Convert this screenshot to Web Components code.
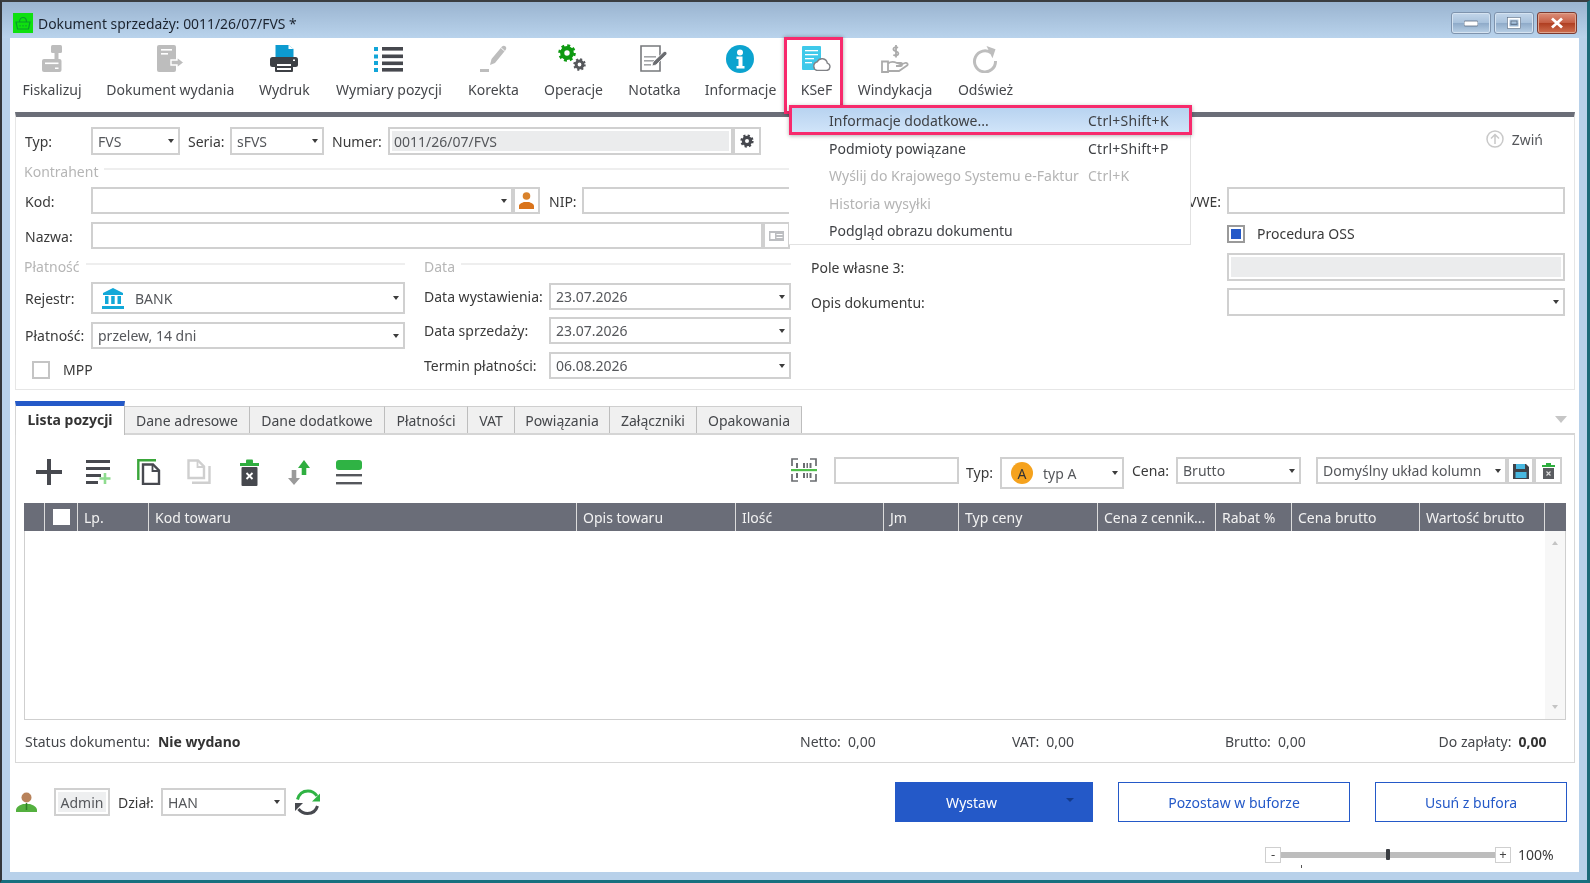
<!DOCTYPE html>
<html lang="pl">
<head>
<meta charset="utf-8">
<title>Dokument sprzedaży</title>
<style>
  html, body { margin: 0; height: 100%; overflow: hidden; background: #2c3136; }
  body { font: 14px "Noto Sans", "Open Sans", sans-serif; color: #3a3a3a; }
</style>
</head>
<body>
<app-window>
  <title-bar></title-bar>
  <tool-bar></tool-bar>
  <doc-form></doc-form>
  <tab-section></tab-section>
  <footer-bar></footer-bar>
  <ksef-menu></ksef-menu>
</app-window>

<script>
// ikony rysowane w pikselach ekranu
const svg = (w, h, body) => `<svg width="${w}" height="${h}" viewBox="0 0 ${w} ${h}" style="display:block;flex:none">${body}</svg>`;

const gear = (cx, cy, r, c, t) => `
  <circle cx="${cx}" cy="${cy}" r="${r}" fill="none" stroke="${c}" stroke-width="${t}"/>
  <circle cx="${cx}" cy="${cy}" r="${r + t / 2}" fill="none" stroke="${c}" stroke-width="${t * 0.9}" stroke-dasharray="${(r + t / 2) * 0.39} ${(r + t / 2) * 0.395}"/>`;

const G = "#bdbdbd";
const icons = {
  fisk: svg(20, 27, `<rect x="9" y="0" width="11" height="8" rx="1.5" fill="${G}"/><rect x="12.5" y="8" width="4" height="8" fill="${G}"/><rect x="0" y="14" width="19.5" height="13" rx="2" fill="${G}"/><rect x="3" y="17.5" width="13.5" height="1.6" fill="#fff"/><rect x="13" y="22.5" width="3.5" height="1.5" fill="#fff"/>`),
  wyd: svg(27, 27, `<rect x="0" y="0" width="19" height="27" rx="2" fill="${G}"/><rect x="4" y="4" width="11" height="1.6" fill="#fff"/><rect x="4" y="8" width="7" height="1.6" fill="#fff"/><path d="M14 15h6v-3l7 5.5-7 5.5v-3h-6z" fill="${G}" stroke="#fff" stroke-width="1.4"/>`),
  print: svg(28, 27, `<path d="M5.5 0h13l5 4v8h-18z" fill="#0d9bd0"/><path d="M18.5 0v4h5z" fill="#fff"/><rect x="0" y="12" width="28" height="10" rx="2.5" fill="#3d4045"/><rect x="5" y="17" width="18" height="10" rx="1" fill="#3d4045"/><rect x="7" y="19" width="14" height="2" fill="#fff"/><rect x="7" y="23" width="14" height="2" fill="#fff"/><rect x="23" y="14.5" width="2" height="1.5" fill="#fff"/>`),
  list: svg(29, 26, `<g fill="#12a5d8"><rect x="0" y="1" width="4" height="4"/><rect x="0" y="8.5" width="4" height="4"/><rect x="0" y="15" width="4" height="4"/><rect x="0" y="22" width="4" height="4"/></g><g fill="#46484e"><rect x="8" y="1" width="21" height="3.6"/><rect x="8" y="8.5" width="21" height="3.6"/><rect x="8" y="15.5" width="21" height="3.6"/><rect x="8" y="22" width="21" height="3.6"/></g>`),
  pen: svg(27, 27, `<path d="M10 20l1.5-6L22 1.5c1-1 2.6-1 3.6 0 .9 1 .9 2.4 0 3.4L15 18z" fill="${G}"/><path d="M21.2 3l3.6 3.2" stroke="#fff" stroke-width="1"/><rect x="0" y="24" width="9" height="3" fill="${G}"/>`),
  ops: svg(30, 29, `${gear(9, 9, 4.8, "#0f9a12", 4.2)}${gear(21.5, 20.5, 3.4, "#55575b", 3)}`),
  note: svg(28, 27, `<path d="M1 1h19v25H1z" fill="#fff" stroke="#77797c" stroke-width="1.6"/><g fill="#a2a4a7"><rect x="4" y="11" width="12" height="1.6"/><rect x="4" y="15" width="10" height="1.6"/><rect x="4" y="19" width="7" height="1.6"/></g><path d="M12 21l1-4L23.5 7c.8-.8 1.9-.8 2.8 0s.8 2 0 2.800L16 20z" fill="#6a6c70" stroke="#fff" stroke-width=".8"/>`),
  info: svg(28, 28, `<circle cx="14" cy="14" r="14" fill="#0ca3cf"/><circle cx="14" cy="7.500" r="3" fill="#fff"/><path d="M10.500 11.500h6v9.500h2v2.500h-8v-2.500h2v-7h-2z" fill="#fff"/>`),
  ksef: svg(29, 25, `<rect x="0" y="0" width="19" height="24" rx="1" fill="#3fc9ea"/><g fill="#fff"><rect x="3" y="4" width="13" height="1.300"/><rect x="3" y="8" width="13" height="1.300"/><rect x="3" y="12" width="9" height="1.300"/><rect x="3" y="16" width="7" height="1.300"/></g><path d="M15 24.500h9.500a3.800 3.800 0 0 0 .8-7.400 5.300 5.300 0 0 0-10-1.300 4.500 4.500 0 0 0-.3 8.700z" fill="#fff" stroke="#808286" stroke-width="1.400"/>`),
  hand: svg(28, 28, `<path d="M17 2.800c-2-1.300-4.600-.6-4.600 1.300 0 3 5 1.700 5 4.500 0 2-2.900 2.600-5 1.200M15 0v12.500" fill="none" stroke="#ababab" stroke-width="1.800"/><path d="M1 16.500h6v10.500H1zM7 18.500c3-2.500 6-2 9-.5h4c1.500 0 1.500 3 0 3h-5M16 21l8-3c2-.6 3.500 1.200 2 2.500L18 26H7" fill="#fff" stroke="#ababab" stroke-width="1.800"/>`),
  redo: svg(26, 28, `<path d="M19.600 8.200A10.500 10.500 0 1 0 23.500 16" fill="none" stroke="${G}" stroke-width="3"/><path d="M14.500 1l9 3.200-3 9z" fill="${G}"/>`),
  plus: svg(26, 26, `<rect x="0" y="11" width="26" height="4" fill="#47494f"/><rect x="11" y="0" width="4" height="26" fill="#47494f"/>`),
  addlist: svg(26, 26, `<g fill="#47494f"><rect x="0" y="1" width="24" height="3"/><rect x="0" y="8" width="24" height="3"/><rect x="0" y="15" width="15" height="3"/><rect x="0" y="22" width="12" height="3"/></g><path d="M19 14v11M13.500 19.500h11" stroke="#8fdc8f" stroke-width="2.600"/>`),
  copy: svg(24, 26, `<path d="M1.300 21V1.300H19" fill="none" stroke="#3aa63a" stroke-width="2.400"/><path d="M6 5.500h10l6 6V25H6z" fill="#fff" stroke="#47494f" stroke-width="2.400"/><path d="M15.500 5.500v6.500H22" fill="none" stroke="#47494f" stroke-width="1.800"/>`),
  paste: svg(24, 26, `<path d="M1.500 1.500h9.500l6 6V19H1.500z" fill="#fff" stroke="#cfcfcf" stroke-width="2.400"/><path d="M10.500 1.500v6.500H17" fill="none" stroke="#cfcfcf" stroke-width="1.800"/><path d="M5 23.800h17.500V7" fill="none" stroke="#cfcfcf" stroke-width="2.400"/>`),
  trash: svg(19, 27, `<rect x="0" y="4" width="19" height="3" fill="#2fae3f"/><rect x="6" y="0.500" width="7" height="4" rx="1" fill="#2fae3f"/><rect x="1.500" y="8" width="16" height="19" rx="1" fill="#46484e"/><path d="M6.500 14l6 6M12.500 14l-6 6" stroke="#fff" stroke-width="1.800"/>`),
  arrows: svg(22, 25, `<path d="M6 25l-6-7h3.700V10h4.600v8H12z" fill="#9a9a9a"/><path d="M16 0l6 8h-3.700v7h-4.600V8H10z" fill="#2fae3f"/>`),
  bars: svg(26, 25, `<rect x="0" y="0" width="26" height="10" rx="3" fill="#2fb344"/><rect x="0" y="14" width="26" height="2.400" fill="#55575c"/><rect x="0" y="22" width="26" height="2.400" fill="#55575c"/>`),
  code: svg(26, 26, `<g fill="none" stroke="#6a6c70" stroke-width="1.700"><path d="M1 9V2h6M25 9V2h-6M1 17v7h6M25 17v7h-6"/></g><g fill="#6a6c70"><rect x="5" y="6" width="2" height="5"/><rect x="12" y="6" width="2" height="5"/><rect x="15.500" y="6" width="1.500" height="5"/><rect x="18.500" y="6" width="2" height="5"/><rect x="5" y="16" width="2" height="5"/><rect x="12" y="16" width="2" height="5"/><rect x="15.500" y="16" width="1.500" height="5"/><rect x="18.500" y="16" width="2" height="5"/></g><rect x="0" y="12" width="26" height="2.200" fill="#4fc04a"/>`),
  floppy: svg(16, 16, `<path d="M0 1h13l3 3v12H0z" fill="#3f4248"/><rect x="3" y="1" width="9" height="5" fill="#48b8e0"/><rect x="2.500" y="9" width="11" height="6" fill="#48b8e0"/>`),
  smalltrash: svg(13, 16, `<rect x="0" y="2" width="13" height="2" fill="#2fae3f"/><rect x="4" y="0" width="5" height="2.500" fill="#2fae3f"/><rect x="1" y="5" width="11" height="11" fill="#5a5c60"/><path d="M4.500 8.500l4 4M8.500 8.500l-4 4" stroke="#ddd" stroke-width="1.100"/>`),
  bank: svg(22, 21, `<g fill="#12a8d8"><path d="M11 0l10 5v2H1V5z"/><rect x="3" y="8" width="3.500" height="8"/><rect x="9.200" y="8" width="3.500" height="8"/><rect x="15.500" y="8" width="3.500" height="8"/><rect x="0" y="18" width="22" height="3"/></g>`),
  gearbtn: svg(16, 16, `${gear(8, 8, 3.600, "#46484e", 3.200)}`),
  orange: svg(15, 17, `<circle cx="7.500" cy="4" r="3.800" fill="#d9822b"/><path d="M0 17v-3c0-2.500 3-3 5-4h5c2 1 5 1.500 5 4v3z" fill="#d9741c"/>`),
  card: svg(15, 10, `<rect width="15" height="10" fill="#bcbec1"/><rect x="1.500" y="2" width="4.500" height="6" fill="#fff"/><g fill="#fff"><rect x="7.500" y="3" width="6" height="1"/><rect x="7.500" y="6" width="6" height="1"/></g>`),
  user: svg(21, 20, `<path d="M0 20v-2c0-3 4-5 7-6h7c3 1 7 3 7 6v2z" fill="#54b03f"/><path d="M10.500 11v7" stroke="#2f7f26" stroke-width="1.500"/><circle cx="10.500" cy="5.500" r="5" fill="#b8825a"/>`),
  sync: svg(25, 26, `<path d="M2.500 10.500C4 5 8 2 13 2c4 0 7 2 9 5" fill="none" stroke="#2fb344" stroke-width="3"/><path d="M25 4.500v8h-8z" fill="#2fb344"/><path d="M22.500 17c-1.500 5-5.500 7.500-10 7.500-4 0-7-2-9-4.500" fill="none" stroke="#47494f" stroke-width="3"/><path d="M0 22v-8h8z" fill="#47494f"/>`),
  zwin: svg(18, 18, `<circle cx="9" cy="9" r="8" fill="none" stroke="#c9c9c9" stroke-width="1.500"/><path d="M9 14V5M5 8.500L9 4.500l4 4" fill="none" stroke="#c9c9c9" stroke-width="1.500"/>`),
  basket: svg(20, 20, `<rect width="20" height="20" fill="#0fe00f"/><path d="M3 9h14l-1.500 7h-11zM6.500 9c0-6 7-6 7 0" fill="none" stroke="#0a9c2a" stroke-width="1.200"/><path d="M7 12v1.500M10 12v1.500M13 12v1.500" stroke="#0a9c2a"/>`)
};

class AppWindow extends HTMLElement {
  constructor() {
    super();
    this.attachShadow({ mode: "open" });
    this.shadowRoot.innerHTML = `
      <style>
        :host {
          display: flex;
          flex-direction: column;
          position: relative;
          box-sizing: border-box;
          width: 1590px;
          height: 883px;
          margin: 0;
          padding: 0 8px 8px;
          border-top: 2px solid #3a3d40;
          border-left: 2px solid #33363a;
          border-right: 3px solid #1c6a78;
          border-bottom: 3px solid #17707f;
          background: #b8d1ea;
          filter: blur(.35px);
        }
        .client { flex: 1; background: #fff; display: flex; flex-direction: column; margin-top: 0; }
      </style>
      <slot name="title"></slot>
      <div class="client"><slot></slot></div>
    `;
  }
  connectedCallback() {
    this.querySelector("title-bar").slot = "title";
  }
}

class TitleBar extends HTMLElement {
  constructor() {
    super();
    this.attachShadow({ mode: "open" });
    this.shadowRoot.innerHTML = `
      <style>
        :host {
          display: flex;
          align-items: center;
          box-sizing: border-box;
          height: 36px;
          margin: 0 -8px;
          padding: 6px 10px 0 11px;
          background: linear-gradient(#9ab4d0, #b9d3ec);
          color: #1c2430;
          font-size: 13.9px;
        }
        span { margin-left: 5px; margin-top: 1px; }
        .btns { margin-left: auto; display: flex; gap: 3px; }
        .b {
          box-sizing: border-box;
          width: 40px;
          height: 22px;
          border: 1px solid #7e93ad;
          border-radius: 3px;
          box-shadow: inset 0 0 0 1px #d5e3f1;
          background: linear-gradient(#c3d6ea 0, #a9c2dc 48%, #8fabc9 52%, #b9d0e6 100%);
          display: flex;
          align-items: center;
          justify-content: center;
        }
        .b.x { border-color: #7c3a30; box-shadow: inset 0 0 0 1px #dfa58f; background: linear-gradient(#dc8f7a 0, #c65f45 48%, #b03f22 52%, #cf6f50 100%); }
      </style>
      ${icons.basket}
      <span>Dokument sprzedaży: 0011/26/07/FVS *</span>
      <div class="btns">
        <div class="b">${svg(14, 8, `<rect x="0" y="2" width="14" height="5" rx="1" fill="#fff" stroke="#5a6b80" stroke-width=".8"/>`)}</div>
        <div class="b">${svg(14, 12, `<rect x="1.500" y="1.500" width="11" height="9" fill="none" stroke="#fff" stroke-width="2"/><rect x=".5" y=".5" width="13" height="11" fill="none" stroke="#5a6b80" stroke-width=".6"/><rect x="4" y="4" width="6" height="3.500" fill="none" stroke="#5a6b80" stroke-width=".8"/>`)}</div>
        <div class="b x">${svg(14, 12, `<path d="M2 1.500l10 9M12 1.500l-10 9" stroke="#fff" stroke-width="2.800"/>`)}</div>
      </div>
    `;
  }
}

class ToolItem extends HTMLElement {
  constructor() {
    super();
    this.attachShadow({ mode: "open" });
  }
  connectedCallback() {
    const ring = this.hasAttribute("ring");
    this.shadowRoot.innerHTML = `
      <style>
        :host {
          display: flex;
          flex-direction: column;
          align-items: center;
          position: relative;
          flex: none;
          white-space: nowrap;
          color: #45474b;
        }
        .ic { height: 27px; display: flex; align-items: center; justify-content: center; }
        .t { margin-top: 8px; line-height: 20px; }
        .ring {
          position: absolute;
          left: -17px;
          right: -11px;
          top: -8px;
          bottom: -2px;
          border: 3px solid #f72a6c;
          box-shadow: 0 0 4px rgba(0,0,0,.35);
        }
      </style>
      <div class="ic">${icons[this.getAttribute("icon")]}</div>
      <div class="t"><slot></slot></div>
      ${ring ? `<div class="ring"></div>` : ""}
    `;
  }
}

class ToolBar extends HTMLElement {
  constructor() {
    super();
    this.attachShadow({ mode: "open" });
    const items = [
      ["fisk", 58, "Fiskalizuj"], ["wyd", 126.6, "Dokument wydania"], ["print", 49.4, "Wydruk"],
      ["list", 108, "Wymiary pozycji"], ["pen", 49, "Korekta"], ["ops", 59, "Operacje"],
      ["note", 51, "Notatka"], ["info", 69, "Informacje"], ["ksef", 31, "KSeF"],
      ["hand", 74, "Windykacja"], ["redo", 55, "Odśwież"]
    ];
    this.shadowRoot.innerHTML = `
      <style>
        :host { display: flex; gap: 26px; height: 74px; box-sizing: border-box; padding: 7px 0 0 13px; }
      </style>
      ${items.map(([i, w, t]) => `<tool-item icon="${i}" style="width:${w}px" ${t === "KSeF" ? "ring" : ""}>${t}</tool-item>`).join("")}
    `;
  }
}

class UiBox extends HTMLElement {
  constructor() {
    super();
    this.attachShadow({ mode: "open" });
  }
  connectedCallback() {
    this.shadowRoot.innerHTML = `
      <style>
        :host {
          display: flex;
          align-items: center;
          flex: none;
          box-sizing: border-box;
          height: 27px;
          border: 2px solid #d0d0d0;
          background: #fff;
          color: #55575b;
          padding-left: 5px;
          white-space: nowrap;
          overflow: hidden;
        }
        :host([gray]) { padding: 2px; }
        .fill { flex: 1; align-self: stretch; background: #ebeced; color: #55575b; display: flex; align-items: center; padding-left: 2px; }
        .c { margin-left: auto; margin-right: 4px; width: 0; height: 0; flex: none; border: 3.5px solid transparent; border-top: 4px solid #3c3c3c; border-bottom: 0; }
        :host([center]) { justify-content: center; padding: 0; }
      </style>
      ${this.hasAttribute("gray") ? `<div class="fill"><slot></slot></div>` : `<slot></slot>`}
      ${this.hasAttribute("caret") ? `<div class="c"></div>` : ""}
    `;
  }
}

class SectionLabel extends HTMLElement {
  constructor() {
    super();
    this.attachShadow({ mode: "open" });
    this.shadowRoot.innerHTML = `
      <style>
        :host { display: flex; align-items: center; height: 18px; color: #b6b6b6; }
        i { flex: 1; height: 2px; background: #eeeeee; margin: -4px 0 0 6px; }
      </style>
      <slot></slot><i></i>
    `;
  }
}

class DocForm extends HTMLElement {
  constructor() {
    super();
    this.attachShadow({ mode: "open" });
    this.shadowRoot.innerHTML = `
      <style>
        :host {
          display: block;
          box-sizing: border-box;
          height: 278px;
          margin: 0 4px 0 5px;
          padding: 10px 9px 0 9px;
          border: 1px solid #e6e6e6;
          border-top: 5px solid #6b6e78;
        }
        .row { display: flex; align-items: center; }
        .l { flex: none; white-space: nowrap; }
        .low { position: relative; top: 1px; }
        .cb { box-sizing: border-box; width: 18px; height: 18px; border: 2px solid #c4c4c4; background: #fff; flex: none; }
        .cb.on { border-color: #9a9a9a; padding: 2px; }
        .cb.on::after { content: ""; display: block; height: 100%; background: #2459c8; }
        .grid { display: grid; grid-template-columns: 380px 367px 1fr; column-gap: 19px; margin-top: 4px; }
        .stack { padding-top: 5px; }
        .zwin { margin-left: auto; margin-right: 22px; display: flex; align-items: center; gap: 8px; color: #55575b; margin-top: -4px; }
        section-label { margin-left: -1px; }
      </style>
      <div class="row" style="height:28px">
        <span class="l" style="width:66px">Typ:</span>
        <ui-box caret style="width:89px;height:28px">FVS</ui-box>
        <span class="l" style="width:42px;margin-left:8px">Seria:</span>
        <ui-box caret style="width:94px;height:28px">sFVS</ui-box>
        <span class="l" style="width:56px;margin-left:8px">Numer:</span>
        <ui-box gray style="width:345px;height:28px">0011/26/07/FVS</ui-box>
        <ui-box center style="width:28px;height:28px;margin-left:0">${icons.gearbtn}</ui-box>
        <div class="zwin">${icons.zwin}<span>Zwiń</span></div>
      </div>
      <section-label style="margin-top:7px;width:782px">Kontrahent</section-label>
      <div class="row" style="margin-top:7px;height:27px">
        <span class="l low" style="width:66px">Kod:</span>
        <ui-box caret style="width:422px"></ui-box>
        <ui-box center style="width:27px">${icons.orange}</ui-box>
        <span class="l low" style="width:33px;margin-left:9px">NIP:</span>
        <ui-box style="width:240px"></ui-box>
        <span class="l low" style="margin-left:auto;margin-right:6px">VWE:</span>
        <ui-box style="width:338px"></ui-box>
      </div>
      <div class="row" style="margin-top:8px;height:27px">
        <span class="l low" style="width:66px">Nazwa:</span>
        <ui-box style="width:672px"></ui-box>
        <ui-box center style="width:27px">${icons.card}</ui-box>
        <div class="row" style="margin-left:auto;width:338px;margin-top:-4px">
          <div class="cb on"></div>
          <span class="l" style="margin-left:12px">Procedura OSS</span>
        </div>
      </div>
      <div class="grid">
        <div class="stack">
          <section-label style="margin-top:-1px">Płatność</section-label>
          <div class="row" style="margin-top:7px">
            <span class="l" style="width:66px">Rejestr:</span>
            <ui-box caret style="width:314px;height:32px;padding-left:9px">${icons.bank}<span style="margin-left:11px">BANK</span></ui-box>
          </div>
          <div class="row" style="margin-top:8px">
            <span class="l" style="width:66px">Płatność:</span>
            <ui-box caret style="width:314px">przelew, 14 dni</ui-box>
          </div>
          <div class="row" style="margin-top:11px;padding-left:7px">
            <div class="cb"></div>
            <span class="l" style="margin-left:13px">MPP</span>
          </div>
        </div>
        <div class="stack">
          <section-label style="margin-top:-1px;margin-left:0">Data</section-label>
          <div class="row" style="margin-top:8px">
            <span class="l" style="width:125px">Data wystawienia:</span>
            <ui-box caret style="width:242px">23.07.2026</ui-box>
          </div>
          <div class="row" style="margin-top:7px">
            <span class="l" style="width:125px">Data sprzedaży:</span>
            <ui-box caret style="width:242px">23.07.2026</ui-box>
          </div>
          <div class="row" style="margin-top:8px">
            <span class="l" style="width:125px">Termin płatności:</span>
            <ui-box caret style="width:242px">06.08.2026</ui-box>
          </div>
        </div>
        <div style="margin-left:1px">
          <div class="row">
            <span class="l" style="width:416px">Pole własne 3:</span>
            <ui-box gray style="width:338px;height:28px"></ui-box>
          </div>
          <div class="row" style="margin-top:7px">
            <span class="l" style="width:416px">Opis dokumentu:</span>
            <ui-box caret style="width:338px;height:28px"></ui-box>
          </div>
        </div>
      </div>
    `;
  }
}

class TabSection extends HTMLElement {
  constructor() {
    super();
    this.attachShadow({ mode: "open" });
    const tabs = [
      ["Lista pozycji", 110], ["Dane adresowe", 125], ["Dane dodatkowe", 135], ["Płatności", 83],
      ["VAT", 47], ["Powiązania", 95], ["Załączniki", 87], ["Opakowania", 105]
    ];
    const cols = ["", "", "Lp.", "Kod towaru", "Opis towaru", "Ilość", "Jm", "Typ ceny", "Cena z cennik...", "Rabat %", "Cena brutto", "Wartość brutto", ""];
    this.shadowRoot.innerHTML = `
      <style>
        :host { display: block; margin: 11px 4px 0 5px; }
        .tabs { display: flex; height: 32px; align-items: flex-end; position: relative; }
        .tab {
          box-sizing: border-box;
          height: 27px;
          display: flex;
          align-items: center;
          justify-content: center;
          flex: none;
          background: #f0f0f0;
          border-top: 1px solid #cfcfcf;
          border-right: 1px solid #bdbdbd;
          color: #45474b;
          white-space: nowrap;
        }
        .tab.on {
          background: #fff;
          border-top: 5px solid #2459c8;
          border-left: 1px solid #d5d5d5;
          font-weight: 700;
          color: #333;
          margin-bottom: -2px;
          height: 34px;
          padding-bottom: 2px;
          position: relative;
          z-index: 1;
        }
        .more { margin-left: auto; margin-right: 8px; align-self: center; margin-top: 5px; width: 0; height: 0; border: 6px solid transparent; border-top: 7px solid #c6c6c6; border-bottom: 0; }
        .panel {
          box-sizing: border-box;
          height: 330px;
          border: 1px solid #d8d8d8;
          border-top: 2px solid #d5d5d5;
          padding: 0 8px;
        }
        .bar { display: flex; align-items: flex-start; height: 68px; box-sizing: border-box; padding: 22px 4px 0 0; }
        .ib { width: 50px; height: 26px; display: flex; align-items: center; justify-content: center; flex: none; margin-top: 2px; }
        .right { margin-left: auto; display: flex; align-items: flex-start; }
        .right .l { white-space: nowrap; line-height: 27px; flex: none; color: #3a3a3a; }
        .head {
          display: grid;
          grid-template-columns: 21px 33px 71px 428px 159px 148px 75px 139px 118px 76px 128px 125px 20px;
          height: 28px;
          background: #6a6d78;
          color: #f2f2f2;
        }
        .head div {
          display: flex;
          align-items: center;
          padding-left: 6px;
          border-right: 1px solid #dcdcdc;
          white-space: nowrap;
          overflow: hidden;
        }
        .head div:last-child { border-right: 0; }
        .head .ck { padding-left: 8px; }
        .head .ck::before { content: ""; width: 17px; height: 16px; background: #fff; flex: none; }
        .body {
          box-sizing: border-box;
          height: 189px;
          border: 1px solid #cfcfcf;
          border-top: 0;
          display: flex;
          justify-content: flex-end;
        }
        .sb { width: 20px; background: #f7f7f7; display: flex; flex-direction: column; justify-content: space-between; align-items: center; padding: 10px 0; }
        .up { width: 0; height: 0; border: 3.5px solid transparent; border-bottom: 4px solid #c4c4c4; border-top: 0; }
        .dn { width: 0; height: 0; border: 3.5px solid transparent; border-top: 4px solid #c4c4c4; border-bottom: 0; }
        .sum { display: grid; grid-template-columns: 775px 212px 213px 213.6px 1fr; height: 41px; align-items: center; padding-left: 1px; color: #45474b; white-space: nowrap; margin-top: 1px; }
        .sum b { color: #333; margin-left: 4px; }
        .sum i { font-style: normal; margin-left: 7px; }
      </style>
      <div class="tabs">
        ${tabs.map(([t, w], i) => `<div class="tab ${i === 0 ? "on" : ""}" style="width:${w}px">${t}</div>`).join("")}
        <div class="more"></div>
      </div>
      <div class="panel">
        <div class="bar">
          <div class="ib">${icons.plus}</div>
          <div class="ib">${icons.addlist}</div>
          <div class="ib">${icons.copy}</div>
          <div class="ib">${icons.paste}</div>
          <div class="ib">${icons.trash}</div>
          <div class="ib">${icons.arrows}</div>
          <div class="ib">${icons.bars}</div>
          <div class="right">
            <div style="margin-right:17px">${icons.code}</div>
            <ui-box style="width:125px"></ui-box>
            <span class="l" style="width:34px;margin-left:7px;line-height:32px">Typ:</span>
            <ui-box caret style="width:124px;height:32px;padding-left:9px">
              <span style="width:22px;height:22px;border-radius:50%;background:#f5a21d;color:#333;display:inline-flex;align-items:center;justify-content:center;margin-right:10px">A</span>typ A
            </ui-box>
            <span class="l" style="width:44px;margin-left:8px">Cena:</span>
            <ui-box caret style="width:125px">Brutto</ui-box>
            <ui-box caret style="width:191px;margin-left:15px">Domyślny układ kolumn</ui-box>
            <ui-box center style="width:27px">${icons.floppy}</ui-box>
            <ui-box center style="width:28px">${icons.smalltrash}</ui-box>
          </div>
        </div>
        <div class="head">
          ${cols.map((c, i) => `<div class="${i === 1 ? "ck" : ""}">${c}</div>`).join("")}
        </div>
        <div class="body"><div class="sb"><div class="up"></div><div class="dn"></div></div></div>
        <div class="sum">
          <span>Status dokumentu:<b style="margin-left:8px">Nie wydano</b></span>
          <span>Netto:<i>0,00</i></span>
          <span>VAT:<i>0,00</i></span>
          <span>Brutto:<i>0,00</i></span>
          <span>Do zapłaty:<b style="margin-left:7px">0,00</b></span>
        </div>
      </div>
    `;
  }
}

class FooterBar extends HTMLElement {
  constructor() {
    super();
    this.attachShadow({ mode: "open" });
    this.shadowRoot.innerHTML = `
      <style>
        :host { display: block; box-sizing: border-box; height: 109px; padding: 19px 12px 0 6px; }
        .top { display: flex; align-items: center; height: 40px; }
        .btn {
          box-sizing: border-box;
          height: 40px;
          display: flex;
          align-items: center;
          justify-content: center;
          border: 1.5px solid #2459c8;
          color: #2459c8;
          background: #fff;
          flex: none;
        }
        .main { width: 198px; background: #2459c8; color: #fff; margin-left: auto; position: relative; padding-right: 45px; }
        .main i { position: absolute; right: 18px; top: 15px; border: 4px solid transparent; border-top: 4px solid #123a8c; border-bottom: 0; }
        .zoom { display: flex; align-items: center; justify-content: flex-end; height: 15px; margin-top: 25px; margin-right: 15px; position: relative; }
        .zoom::after { content: ""; position: absolute; left: 1285px; top: 18px; width: 1px; height: 3px; background: #555; }
        .zb { box-sizing: border-box; width: 16px; height: 16px; border: 1px solid #cfcfcf; display: flex; align-items: center; justify-content: center; color: #444; line-height: 1; font-size: 13px; flex: none; }
        .track { width: 214px; height: 6px; background: #bdbdbd; position: relative; flex: none; }
        .thumb { position: absolute; left: 105px; top: -3px; width: 4px; height: 11px; background: #3a3d42; border-radius: 1px; }
        .pct { margin-left: 7px; width: 34px; white-space: nowrap; }
        .admin { box-sizing: border-box; width: 56px; height: 28px; border: 2px solid #d0d0d0; padding: 2px; margin-left: 17px; }
        .admin div { background: #eeeff0; height: 100%; display: flex; align-items: center; justify-content: center; color: #55575b; }
      </style>
      <div class="top">
        ${icons.user}
        <div class="admin"><div>Admin</div></div>
        <span style="margin-left:8px;width:43px">Dział:</span>
        <ui-box caret style="width:125px;height:28px">HAN</ui-box>
        <div style="margin-left:9px">${icons.sync}</div>
        <div class="btn main">Wystaw<i></i></div>
        <div class="btn" style="width:232px;margin-left:25px">Pozostaw w buforze</div>
        <div class="btn" style="width:192px;margin-left:25px">Usuń z bufora</div>
      </div>
      <div class="zoom">
        <div class="zb">-</div>
        <div class="track"><div class="thumb"></div></div>
        <div class="zb">+</div>
        <span class="pct">100%</span>
      </div>
    `;
  }
}

class KsefMenu extends HTMLElement {
  constructor() {
    super();
    this.attachShadow({ mode: "open" });
    const rows = [
      ["Informacje dodatkowe...", "Ctrl+Shift+K", "hi"],
      ["Podmioty powiązane", "Ctrl+Shift+P", ""],
      ["Wyślij do Krajowego Systemu e-Faktur", "Ctrl+K", "off"],
      ["Historia wysyłki", "", "off"],
      ["Podgląd obrazu dokumentu", "", ""]
    ];
    this.shadowRoot.innerHTML = `
      <style>
        :host {
          position: absolute;
          left: 787px;
          top: 103px;
          width: 402px;
          background: #fff;
          border-right: 1px solid #e2e2e2;
          border-bottom: 1px solid #e2e2e2;
          box-sizing: border-box;
        }
        .it { display: grid; grid-template-columns: 259px 1fr; align-items: center; height: 27.3px; padding-left: 40px; white-space: nowrap; color: #3f4145; }
        .it span + span { letter-spacing: .25px; }
        .it.off { color: #b4b4b4; }
        .it.hi {
          box-sizing: border-box;
          height: 30px;
          margin-right: -2px;
          padding-left: 37px;
          border: 3px solid #f72a6c;
          background: linear-gradient(#b8d3f0, #d0e4f9);
          box-shadow: 0 1px 4px rgba(0,0,0,.3);
        }
      </style>
      ${rows.map(([a, b, c]) => `<div class="it ${c}"><span>${a}</span><span>${b}</span></div>`).join("")}
    `;
  }
}

customElements.define("app-window", AppWindow);
customElements.define("title-bar", TitleBar);
customElements.define("tool-item", ToolItem);
customElements.define("tool-bar", ToolBar);
customElements.define("ui-box", UiBox);
customElements.define("section-label", SectionLabel);
customElements.define("doc-form", DocForm);
customElements.define("tab-section", TabSection);
customElements.define("footer-bar", FooterBar);
customElements.define("ksef-menu", KsefMenu);
</script>
</body>
</html>
